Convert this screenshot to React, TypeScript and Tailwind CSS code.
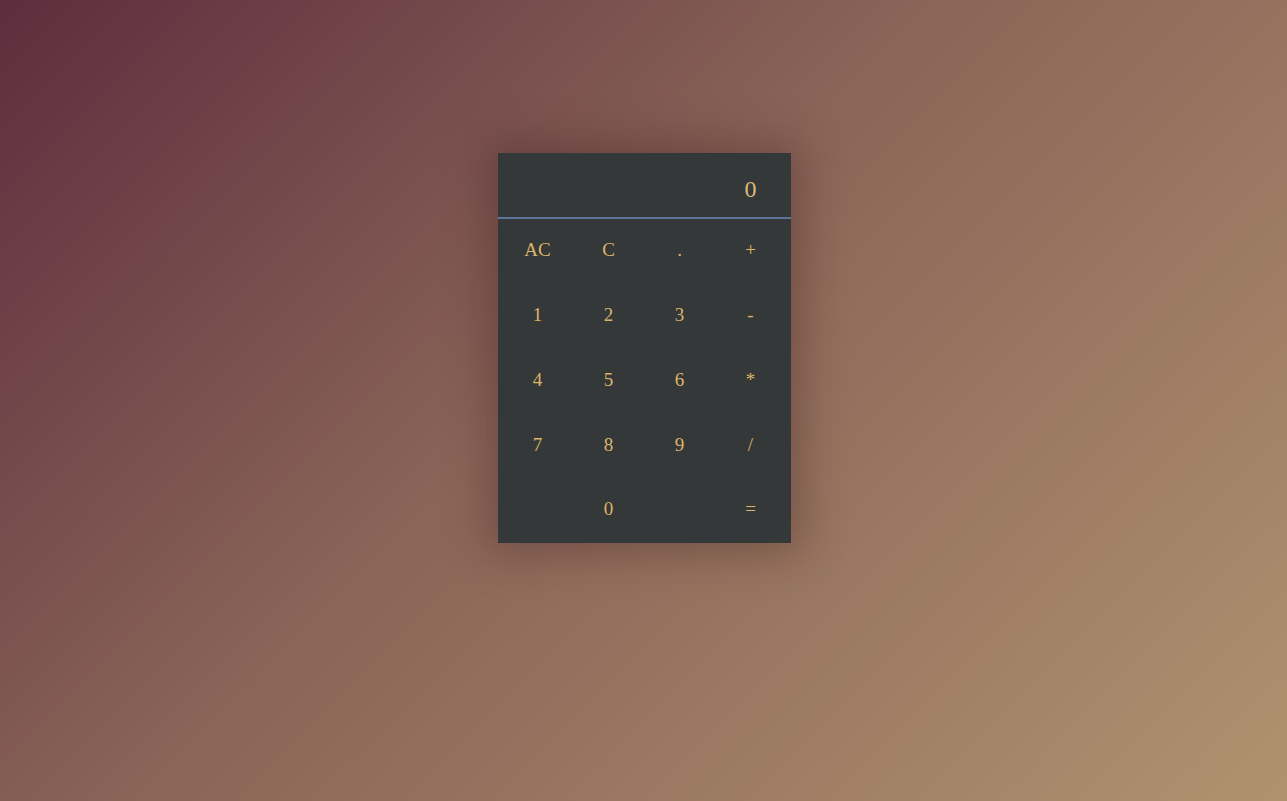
const keys = ['AC', 'C', '.', '+', '1', '2', '3', '-', '4', '5', '6', '*', '7', '8', '9', '/', '', '0', '', '='];

const App = () => {
  return (
    <div className="w-full h-[801px] bg-[linear-gradient(135deg,#5e2d3e_0%,#8a6558_45%,#b0926f_100%)] flex justify-center items-start pt-[153px] pl-[1px] font-['Liberation_Serif',serif]">
      <div className="w-[293px] bg-[#343838] shadow-[0_0_40px_10px_rgba(60,30,30,0.35)]">
        <div className="h-[64px] flex items-center justify-end pr-[34px] text-[24px] text-[#dcb97a] pt-[8px]">0</div>
        <div className="h-[2px] bg-[#5e7698]" />
        <div className="grid grid-cols-4 px-[4.5px]">
          {keys.map((k, i) => (
            <button
              key={i}
              className="h-[64.8px] flex items-center justify-center pb-[2px] text-[19px] text-[#dcb46a] cursor-pointer"
            >
              {k}
            </button>
          ))}
        </div>
      </div>
    </div>
  );
};

export default App;
